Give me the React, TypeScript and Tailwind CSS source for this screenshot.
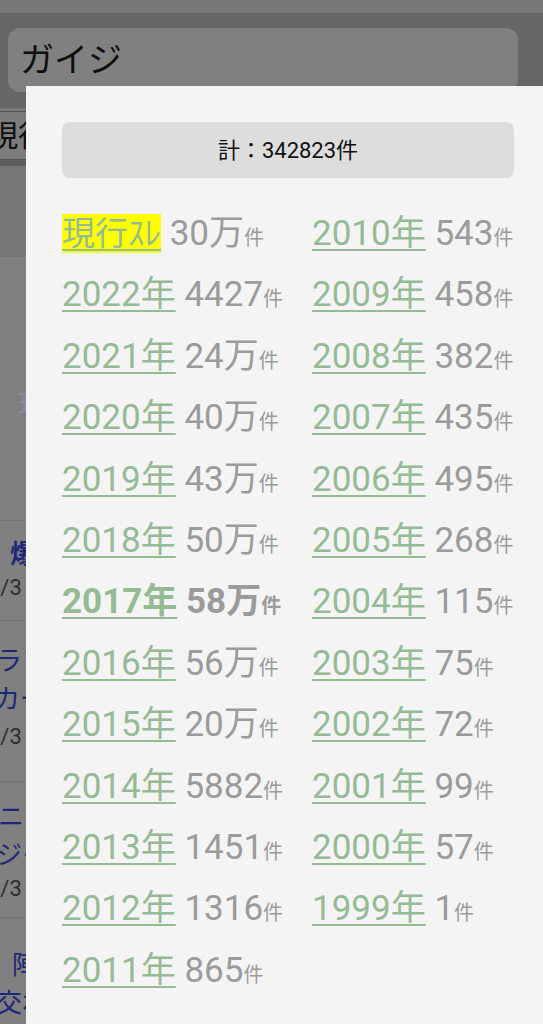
import React from 'react';

type Row = { label: string; count: string; mark?: 'hl' | 'bold' };

const leftRows: Row[] = [
  { label: '現行ｽﾚ', count: '30万', mark: 'hl' },
  { label: '2022年', count: '4427' },
  { label: '2021年', count: '24万' },
  { label: '2020年', count: '40万' },
  { label: '2019年', count: '43万' },
  { label: '2018年', count: '50万' },
  { label: '2017年', count: '58万', mark: 'bold' },
  { label: '2016年', count: '56万' },
  { label: '2015年', count: '20万' },
  { label: '2014年', count: '5882' },
  { label: '2013年', count: '1451' },
  { label: '2012年', count: '1316' },
  { label: '2011年', count: '865' },
];

const rightRows: Row[] = [
  { label: '2010年', count: '543' },
  { label: '2009年', count: '458' },
  { label: '2008年', count: '382' },
  { label: '2007年', count: '435' },
  { label: '2006年', count: '495' },
  { label: '2005年', count: '268' },
  { label: '2004年', count: '115' },
  { label: '2003年', count: '75' },
  { label: '2002年', count: '72' },
  { label: '2001年', count: '99' },
  { label: '2000年', count: '57' },
  { label: '1999年', count: '1' },
];

const YearRow: React.FC<{ row: Row }> = ({ row }) => {
  const bold = row.mark === 'bold';
  const hl = row.mark === 'hl';
  return (
    <div className={`h-[61.4px] leading-[61.4px] whitespace-nowrap text-[35px] ${bold ? 'font-bold' : ''}`}>
      <span
        className={`text-[#94bb94] underline decoration-2 underline-offset-[4px] ${hl ? 'bg-[#ffff00] text-[33px]' : ''}`}
      >
        {row.label}
      </span>{' '}
      <span className="text-[#9b9b9b]">
        {row.count}
        <span className="text-[20px] leading-none">件</span>
      </span>
    </div>
  );
};

export default function App() {
  return (
    <div className="relative h-[1024px] w-full overflow-hidden bg-[#808080] font-['Roboto','Noto_Sans_CJK_JP',sans-serif]">
      {/* dimmed page underneath */}
      <div className="h-[13px] bg-[#777777]" />
      <div className="bg-[#666666] px-2 pt-[15px] pb-4">
        <div className="flex h-[64px] w-[510px] items-center rounded-xl bg-[#808080] px-3 text-[34px] text-[#0e0e0e]">
          ガイジ
        </div>
      </div>
      <div className="h-[3px] bg-[#777777]" />
      <div className="flex h-[49px] items-center border-y border-[#555555] bg-[#7c7c7c]">
        <div className="-ml-[12px] text-[30px] leading-none text-[#0e0e0e]">現行</div>
      </div>
      <div className="h-[6px] bg-[#5e5e5e]" />
      <div className="h-[91px] bg-[#767676]" />
      <div className="h-[263px] pt-[136px]">
        <div className="pl-[18px] text-[28px] leading-none text-[#8a89a6]">現</div>
      </div>
      <div className="border-t border-[#737373]">
        <div className="pt-[14px] pb-[17px]">
          <div className="pl-[10px] text-[26px] leading-[38px] font-bold text-[#1e2878]">爆</div>
          <div className="-ml-[12px] text-[22px] leading-[30px] text-[#2e2e2e]">1/3</div>
        </div>
        <div className="border-t border-[#737373] pt-[21px] pb-[29px]">
          <div className="-ml-[4px] text-[26px] leading-[38px] text-[#1e2878]">ラフ</div>
          <div className="-ml-[6px] text-[26px] leading-[38px] text-[#1e2878]">カー</div>
          <div className="-ml-[12px] mt-[4px] text-[22px] leading-[30px] text-[#2e2e2e]">1/3</div>
        </div>
        <div className="border-t border-[#737373] pt-[16px] pb-[13px]">
          <div className="-ml-[2px] text-[26px] leading-[38px] text-[#1e2878]">ニッ</div>
          <div className="-ml-[4px] text-[26px] leading-[38px] text-[#1e2878]">ジャ</div>
          <div className="-ml-[12px] text-[22px] leading-[30px] text-[#2e2e2e]">1/3</div>
        </div>
        <div className="border-t border-[#737373] pt-[28px]">
          <div className="pl-[12px] text-[26px] leading-[38px] text-[#1e2878]">陣</div>
          <div className="-ml-[4px] text-[26px] leading-[38px] text-[#1e2878]">交わ</div>
        </div>
      </div>

      {/* year picker panel */}
      <div className="absolute top-[86px] right-0 bottom-0 left-[26px] bg-[#f4f4f4] pt-9 pr-[29px] pl-9">
        <div className="flex h-[56px] items-center justify-center rounded-lg bg-[#dddddd] text-[22px] text-[#111111]">
          計：342823件
        </div>
        <div className="mt-[25px] flex">
          <div className="w-[250px]">
            {leftRows.map((r) => (
              <YearRow key={r.label} row={r} />
            ))}
          </div>
          <div className="flex-1">
            {rightRows.map((r) => (
              <YearRow key={r.label} row={r} />
            ))}
          </div>
        </div>
      </div>
    </div>
  );
}
